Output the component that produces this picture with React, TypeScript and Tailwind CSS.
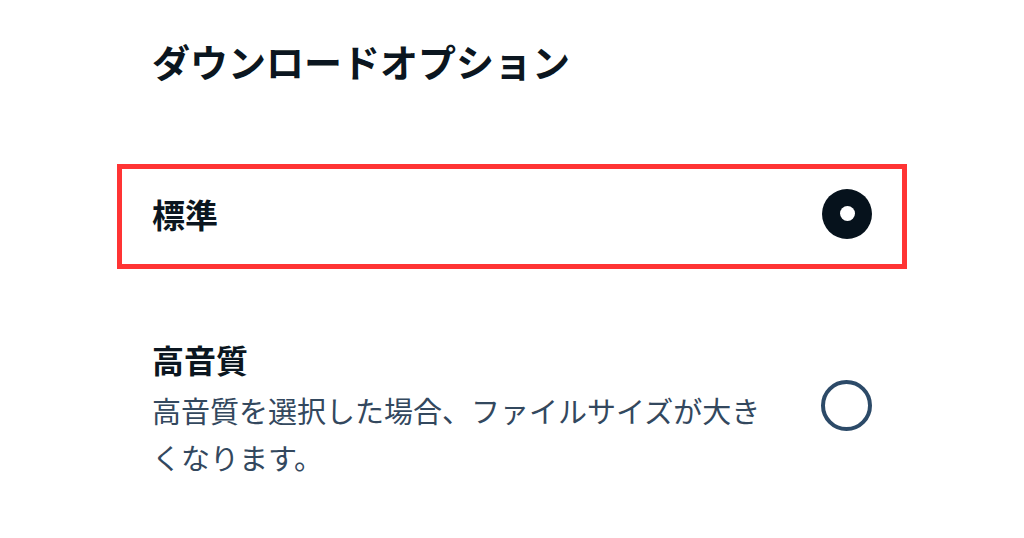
export default function App() {
  return (
    <div
      className="w-[1024px] h-[538px] bg-white overflow-hidden"
      style={{ fontFamily: '"Noto Sans CJK JP", "Noto Sans", sans-serif' }}
    >
      <div className="ml-[117px] w-[790px]">
        {/* Title */}
        <h1 className="pl-[35px] pt-[42px] text-[38px] leading-[38px] font-bold text-[#0b1620]">
          ダウンロードオプション
        </h1>

        {/* Standard (selected) */}
        <div className="mt-[84px] h-[105px] border-[5px] border-[#ff3434] px-[30px] pb-[6px] flex items-center justify-between">
          <span className="text-[33px] leading-[40px] font-bold text-[#0b1620]">標準</span>
          <div className="w-[50px] h-[50px] rounded-full bg-[#06121c] flex items-center justify-center">
            <div className="w-[15px] h-[15px] rounded-full bg-white" />
          </div>
        </div>

        {/* High quality */}
        <div className="mt-[70px] px-[35px] flex items-center justify-between">
          <div className="w-[625px]">
            <div className="text-[32px] leading-[40px] font-bold text-[#0b1620]">高音質</div>
            <p className="mt-[8px] text-[29px] leading-[47px] text-[#33485e]">
              高音質を選択した場合、ファイルサイズが大きくなります。
            </p>
          </div>
          <div className="w-[51px] h-[51px] rounded-full border-[4px] border-[#2c4a68] mb-[10px]" />
        </div>
      </div>
    </div>
  )
}
